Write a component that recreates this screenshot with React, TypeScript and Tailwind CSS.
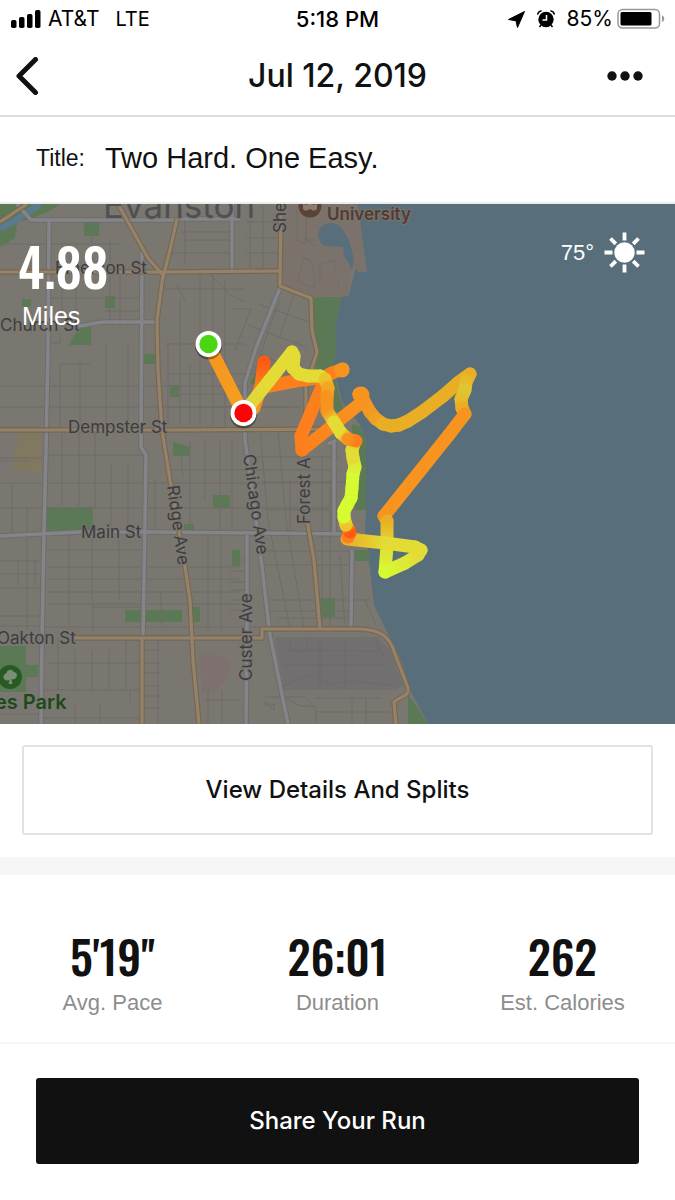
import React from "react";

type TrailPoint = [number, number, string];

const ORANGE = "#f79420";
const DEEP = "#fd7f1c";
const RED = "#fd5a12";
const GOLD = "#eaae25";
const YELLOW = "#e3dc35";
const LIME = "#d6fb30";

const trails: TrailPoint[][] = [
  [
    [208, 344, ORANGE],
    [243, 413, "#f3a01f"],
  ],
  [
    [254, 408, ORANGE],
    [261, 386, DEEP],
    [264, 362, RED],
  ],
  [
    [264, 387, DEEP],
    [295, 381, DEEP],
    [325, 377, DEEP],
    [332, 373, DEEP],
    [343, 369, ORANGE],
  ],
  [
    [324, 382, DEEP],
    [301, 436, DEEP],
    [302, 450, DEEP],
    [362, 402, ORANGE],
    [359, 394, ORANGE],
    [364, 401, ORANGE],
    [370, 412, "#f3991f"],
    [376, 419, "#f0a022"],
    [383, 424, GOLD],
    [391, 426, GOLD],
    [399, 425, GOLD],
    [408, 421, GOLD],
    [422, 412, GOLD],
    [443, 396, GOLD],
    [459, 382, GOLD],
    [470, 374, GOLD],
    [466, 382, "#e6bb29"],
    [465, 390, "#dfc533"],
    [461, 399, "#e4bd2b"],
    [462, 408, GOLD],
    [465, 414, ORANGE],
    [448, 436, ORANGE],
    [384, 516, ORANGE],
    [387, 521, GOLD],
    [387, 546, YELLOW],
    [385, 572, LIME],
    [405, 563, "#dde937"],
    [418, 555, YELLOW],
    [421, 550, YELLOW],
    [415, 547, YELLOW],
    [385, 543, YELLOW],
    [347, 539, GOLD],
  ],
  [
    [348, 537, DEEP],
    [350, 532, RED],
    [346, 525, "#ecc52a"],
    [344, 517, LIME],
    [344, 511, LIME],
    [347, 505, LIME],
    [351, 498, LIME],
    [352, 488, LIME],
    [353, 474, LIME],
    [355, 467, "#dcef38"],
    [353, 458, YELLOW],
    [352, 450, YELLOW],
    [355, 441, "#f0bb25"],
  ],
  [
    [246, 410, "#ddd43a"],
    [269, 381, YELLOW],
    [292, 352, YELLOW],
    [294, 356, YELLOW],
    [293, 368, YELLOW],
    [299, 374, YELLOW],
    [308, 376, YELLOW],
    [320, 376, YELLOW],
    [325, 379, "#e9c52b"],
    [328, 388, "#f3a524"],
    [327, 397, ORANGE],
    [327, 411, ORANGE],
    [334, 422, YELLOW],
    [341, 433, YELLOW],
    [348, 439, ORANGE],
    [356, 441, DEEP],
  ],
];

const minorStreets = [
  "M0 231H18M48 244H120M48 244H0M170 253H232M180 232H232M48 298H142M105 311H140M165 289H245M165 344H245M60 364H90M0 386H46M48 386H250M0 407H48M48 407H300",
  "M0 458H44M48 455H143M0 483H335M0 508H330M0 461H30M172 470H340M48 550H143M48 567H240M48 579H240M48 592H240M48 604H240M92 607H142M0 561H40M0 574H40M0 588H40M0 616H40M0 626H40M44 627H260M0 714H40M48 663H142M44 690H140M40 718H142",
  "M92 222V270M62 272V320M76 272V322M110 240V322M120 275V330M60 364V430M80 364V430M106 344V430M128 344V430M62 434V506M79 433V506M95 433V508M111 463V530M128 463V530M12 483V534M27 508V630M18 560V586M35 561V586M46 343H60V333",
  "M69 535V625M92 535V600M119 535V600M93 600V632M161 592V625M208 535V630M221 535V630M58 638V690M75 650V690M92 650V690M109 650V690M126 638V690M75 704V724M100 704V724M130 690V702",
  "M185 220V265M185 240H232M200 272V430M213 272V430M225 280V430M177 285L185 301M210 275L231 295L245 302M232 205V270M232 309H251L235 350M168 344V425M180 344V425M190 365V425M180 299V344M170 374H310M170 394H260M170 407H290",
  "M145 650H160M145 663H160M145 673H160M145 686H160M158 638V724M145 696H160M145 708H160M205 700H240M208 690V724M222 690V724M230 560H248M230 571H248M230 582H248M230 590H248M230 600H248M230 610H248",
  "M246 222H280M246 238H280M246 253H280M250 206V270M263 206V270M280 300L270 326L262 350M295 292L280 335M248 325L306 347M258 304L318 325M251 350L300 372M262 350L254 372M205 441V500M190 441V535M220 441V535M232 441V535M180 445L183 478M155 480V535",
  "M260 429L268 520L290 628M278 429L286 520L304 628M290 480V535M322 455V628M330 480V628M340 555L345 628M255 457H340M262 482H350M268 510H340M258 551H350M260 565H350M264 600H370M278 618H350M270 611H350",
  "M297 210V240L306 244V232M306 206V240L316 246M298 281L303 258L310 260L314 272V288L298 281M320 282V265L335 260V270M338 278V286M304 240H315M365 600L376 625",
  "M290 640V651L302 652L308 649M307 637V648L298 653M320 640V690M345 640V690M376 640L385 660M285 665H385M280 687L310 675L330 684L352 681L396 686M285 650L380 651",
  "M264 697H305L316 710V724M264 702L274 710V704H264M283 697L300 706L315 706M316 698H380M316 712H390M352 698V724M366 698V724",
];

const lightRoads = [
  "M17 204L31 220H178",
  "M178 219H240",
  "M49 221L48 350L46 450L44 530L42 640L41 724",
  "M142 252L141 447L146 455L143 638",
  "M72 326C85 327 93 322 105 322H158",
  "M0 536L80 532H150L360 534",
  "M232 204V270",
  "M280 288L256 348L245 383V440L250 475L260 550L270 635L288 724",
  "M247 535V630L246 724",
  "M334 440V534M336 440L328 444M352 550L351 628",
];

const amberRoads = [
  "M0 272H165L280 271",
  "M0 430H175L345 429",
  "M118 204L148 258L163 275L157 320L158 370L162 430L170 480L184 560L190 600L193 660L199 724",
  "M177 219L170 250L163 278",
  "M281 204L280 286L311 298L312 330L317 352L306 387V420",
  "M307 520L314 560L320 629",
  "M75 638H262V629H356C377 629 386 634 392 646L408 688C409 697 402 695 394 702L396 724",
  "M142 638V724",
  "M0 222L27 204",
];

const greens = [
  "M0 204H60L48 212L26 220L17 222L15 238L0 247Z",
  "M84 220H99V236H84Z",
  "M105 296H115V308H105Z",
  "M22 299H31V307H22Z",
  "M79 326H91V345H69Z",
  "M144 354H155V364H144Z",
  "M170 385H179V397H170Z",
  "M173 442L190 447V456H173Z",
  "M47 507H93V532H47Z",
  "M213 495H230V508H213Z",
  "M184 524H194V530H184Z",
  "M125 610H182V622H125Z",
  "M192 607H200V622H192Z",
  "M232 550H240V566H232Z",
  "M320 598H335V617H320Z",
  "M0 646H26V665H38V677H26V692H0Z",
  "M314 297H341L335 330L336 350L333 366L340 400L345 412L328 412L325 395L316 372L317 352L312 325Z",
  "M352 424L360 427L366 440V510H355L352 470Z",
  "M355 550H369V561H355Z",
  "M250 383L262 362L256 386Z",
  "M408 696L415 704L428 724H408Z",
];

function Trail({ points, id }: { points: TrailPoint[]; id: number }) {
  return (
    <g fill="none" strokeWidth="13" strokeLinecap="round">
      {points.slice(1).map((p, i) => {
        const [x1, y1, c1] = points[i];
        const gid = `seg-${id}-${i}`;
        return (
          <g key={gid}>
            <linearGradient id={gid} gradientUnits="userSpaceOnUse" x1={x1} y1={y1} x2={p[0]} y2={p[1]}>
              <stop offset="0" stopColor={c1} />
              <stop offset="1" stopColor={p[2]} />
            </linearGradient>
            <path d={`M${x1} ${y1}L${p[0]} ${p[1]}`} stroke={`url(#${gid})`} />
          </g>
        );
      })}
    </g>
  );
}

function Marker({ x, y, color }: { x: number; y: number; color: string }) {
  return (
    <g>
      <circle cx={x} cy={y + 2} r="13.5" fill="#000" opacity="0.35" />
      <circle cx={x} cy={y} r="13" fill="#fff" />
      <circle cx={x} cy={y} r="9.2" fill={color} />
    </g>
  );
}

function RouteMap() {
  return (
    <svg viewBox="0 204 675 520" className="block h-auto w-full font-['Inter',sans-serif]" role="img" aria-label="Run route map">
      <rect x="0" y="204" width="675" height="520" fill="#586f7b" />
      <path
        d="M0 204H345L355 240L355 270L349 295L341 297L335 330L336 350L333 366L342 402L360 425L366 440V510L365 530L369 560L374 605L388 634L402 662L410 690L428 724H0Z"
        fill="#7a7771"
      />
      <path d="M283 204H340L358 204L367 272H358L350 262L352 268L348 296L314 297L283 285Z" fill="#7b736b" />
      <path d="M319 231C322 223 333 220 340 227C349 236 352 248 354 262L352 270L349 264L344 256L343 247C334 246 324 248 320 242C318 238 318 234 319 231Z" fill="#586f7b" />
      <path d="M19 430H42V474L12 468Z" fill="#807860" />
      <path d="M199 655L220 655L232 664L226 682L212 692H202Z" fill="#7d706e" />
      <path d="M275 637H378L390 650L403 686L395 690H284Z" fill="#716f70" />
      {greens.map((d) => (
        <path key={d} d={d} fill="#5c7955" />
      ))}
      <path d="M0 229C12 222 28 213 40 204" fill="none" stroke="#587b91" strokeWidth="6" />
      <g fill="none" stroke="#6e6c69" strokeWidth="1">
        {minorStreets.map((d) => (
          <path key={d} d={d} />
        ))}
      </g>
      <g fill="none" strokeLinejoin="round">
        {lightRoads.map((d) => (
          <path key={d} d={d} stroke="#6e6d6d" strokeWidth="5.5" />
        ))}
        {lightRoads.map((d) => (
          <path key={d} d={d} stroke="#858488" strokeWidth="3.5" />
        ))}
        {amberRoads.map((d) => (
          <path key={d} d={d} stroke="#796650" strokeWidth="5.5" />
        ))}
        {amberRoads.map((d) => (
          <path key={d} d={d} stroke="#93836a" strokeWidth="3.2" />
        ))}
      </g>

      <g fill="#3d3c40" stroke="#7a7771" strokeWidth="2" paintOrder="stroke" fontSize="17">
        <text x="103" y="218" fontSize="35" fill="#504f52">Evanston</text>
        <text x="55" y="274">Emerson St</text>
        <text x="0" y="331">Church St</text>
        <text x="68" y="433">Dempster St</text>
        <text x="81" y="538">Main St</text>
        <text x="-3" y="644">Oakton St</text>
        <text transform="translate(167 486) rotate(82)">Ridge Ave</text>
        <text transform="translate(243 455) rotate(82)">Chicago Ave</text>
        <text transform="translate(310 524) rotate(-90)">Forest A</text>
        <text transform="translate(252 681) rotate(-90)">Custer Ave</text>
        <text transform="translate(286 233) rotate(-90)">She</text>
      </g>
      <text x="327" y="220" fontSize="17" fontWeight="600" fill="#513c32" stroke="#7d736b" strokeWidth="2" paintOrder="stroke">University</text>
      <circle cx="310" cy="206" r="11.5" fill="#5b4336" />
      <path d="M303 203l3 2 4-2 4 2 3-2v6c-3 3-5 1-7 0-2 1-5 3-7 0z" fill="#8b7b70" />
      <text x="-5" y="709" fontSize="20" fontWeight="600" fill="#1e4a1b" stroke="#7a7771" strokeWidth="1" paintOrder="stroke">es Park</text>
      <circle cx="10" cy="677" r="12" fill="#275b23" />
      <path d="M8.5 684l1-4c-3 1-6 0-6-3s2-3 3-4c1-4 6-4 7-1 3 0 4 3 3 5s-3 3-5 2l1 5z" fill="#7c8d75" />

      {trails.map((points, i) => (
        <Trail key={i} points={points} id={i} />
      ))}
      <circle cx="342" cy="370" r="7.5" fill={ORANGE} />
      <circle cx="361" cy="395" r="8.5" fill={ORANGE} />
      <Marker x={208.5} y={344} color="#4bd613" />
      <Marker x={243.5} y={413} color="#fa0505" />
    </svg>
  );
}

function StatusBar() {
  return (
    <div className="flex h-[38px] items-center px-[10px] font-['Inter',sans-serif] text-[21px] leading-6 text-black">
      <div className="flex flex-1 items-center">
        <svg width="32" height="20" viewBox="0 0 32 20" aria-hidden="true">
          <rect x="1" y="11" width="5.5" height="8" rx="1.8" />
          <rect x="9" y="8" width="5.5" height="11" rx="1.8" />
          <rect x="17" y="5" width="5.5" height="14" rx="1.8" />
          <rect x="25" y="1" width="5.5" height="18" rx="1.8" />
        </svg>
        <span className="ml-[6px]">AT&amp;T</span>
        <span className="ml-4 text-[20px]">LTE</span>
      </div>
      <span className="text-[22px] font-medium">5:18 PM</span>
      <div className="flex flex-1 items-center justify-end">
        <svg width="17" height="17" viewBox="0 0 17 17" aria-hidden="true">
          <path d="M16.500 0.500L9.500 16.500L8 9.800L0.500 8.500Z" stroke="#000" strokeWidth="1" strokeLinejoin="round" />
        </svg>
        <svg className="ml-3" width="18" height="18" viewBox="0 0 18 18" aria-hidden="true">
          <circle cx="9" cy="9.500" r="7.700" />
          <path d="M0.500 4.500C1 2.500 2.500 1 4.500 0.700M17.500 4.500C17 2.500 15.500 1 13.500 0.700" fill="none" stroke="#000" strokeWidth="1.500" />
          <path d="M9.500 5V10H5.500" fill="none" stroke="#fff" strokeWidth="1.500" />
          <path d="M4 15L2.500 17M14 15L15.500 17" stroke="#000" strokeWidth="1.500" />
        </svg>
        <span className="ml-3">85%</span>
        <svg className="ml-1" width="48" height="22" viewBox="0 0 48 22" aria-hidden="true">
          <rect x="1" y="1.500" width="41.500" height="18.500" rx="4.500" fill="none" stroke="#999" strokeWidth="1.500" />
          <rect x="3.500" y="4" width="31" height="13.500" rx="1.500" />
          <path d="M45 7.500c3 1 3 5.500 0 6.500z" fill="#999" />
        </svg>
      </div>
    </div>
  );
}

function Stat({ value, label }: { value: string; label: string }) {
  return (
    <div className="flex flex-1 flex-col items-center">
      <span className="font-['Oswald','Roboto_Condensed','Open_Sans_Condensed',sans-serif] text-[46px] font-medium leading-[56px] text-[#111]">{value}</span>
      <span className="mt-[7px] text-[22px] leading-[26px] text-[#8d8d8d]">{label}</span>
    </div>
  );
}

export default function App() {
  return (
    <div className="min-h-screen bg-white font-['Liberation_Sans',Arial,sans-serif] text-[#111]">
      <StatusBar />
      <header className="flex h-[79px] items-center justify-between border-b-2 border-[#dcdcdc] px-4 pb-[2px]">
        <button type="button" aria-label="Back" className="w-[52px]">
          <svg width="24" height="38" viewBox="0 0 24 38" fill="none" stroke="#111" strokeWidth="5" strokeLinecap="round" strokeLinejoin="round" aria-hidden="true">
            <path d="M19.500 2.500L3 19L19.500 35.500" />
          </svg>
        </button>
        <h1 className="font-['Inter',sans-serif] text-[32px] font-medium leading-10">Jul 12, 2019</h1>
        <button type="button" aria-label="More options" className="w-[52px]">
          <svg width="36" height="12" viewBox="0 0 36 12" fill="#111" aria-hidden="true">
            <circle cx="5" cy="6" r="4.700" />
            <circle cx="18" cy="6" r="4.700" />
            <circle cx="31" cy="6" r="4.700" />
          </svg>
        </button>
      </header>
      <div className="flex h-[87px] items-center border-b-2 border-[#ececec] px-9 pb-1">
        <label htmlFor="run-title" className="text-[23px] leading-9">Title:</label>
        <input id="run-title" type="text" defaultValue="Two Hard. One Easy." className="ml-5 min-w-0 flex-1 bg-transparent text-[29px] leading-9 outline-none" />
      </div>

      <section className="relative">
        <RouteMap />
        <div className="absolute left-[18px] top-[30px] text-white">
          <p className="font-['Oswald','Roboto_Condensed','Open_Sans_Condensed',sans-serif] text-[52px] font-medium leading-[64px]">4.88</p>
          <p className="mt-[2px] pl-1 text-[25px] leading-8">Miles</p>
        </div>
        <div className="absolute right-[30px] top-[28px] flex items-center gap-[10px] text-white">
          <span className="text-[22px] leading-10">75°</span>
          <svg width="41" height="41" viewBox="-20.500 -20.500 41 41" aria-hidden="true">
            <circle r="10.200" fill="#fff" />
            <path
              d="M0 -20V-12M0 12V20M-20 0H-12M12 0H20M-14 -14L-8.700 -8.700M8.700 8.700L14 14M14 -14L8.700 -8.700M-8.700 8.700L-14 14"
              stroke="#fff"
              strokeWidth="3.800"
            />
          </svg>
        </div>
      </section>

      <div className="px-[22px] pb-[22px] pt-[21px]">
        <button type="button" className="h-[90px] w-full rounded-[3px] border-2 border-[#e2e2e2] bg-white font-['Inter',sans-serif] text-[24px] font-medium leading-8">
          View Details And Splits
        </button>
      </div>
      <div className="h-[18px] bg-[#f6f6f6]" />
      <section className="flex justify-between border-b-2 border-[#f6f6f6] pb-[26px] pt-[52px]">
        <Stat value="5'19''" label="Avg. Pace" />
        <Stat value="26:01" label="Duration" />
        <Stat value="262" label="Est. Calories" />
      </section>
      <div className="px-9 py-[34px]">
        <button type="button" className="h-[86px] w-full rounded-[3px] bg-[#111] font-['Inter',sans-serif] text-[24px] font-medium leading-8 text-white">
          Share Your Run
        </button>
      </div>
    </div>
  );
}
